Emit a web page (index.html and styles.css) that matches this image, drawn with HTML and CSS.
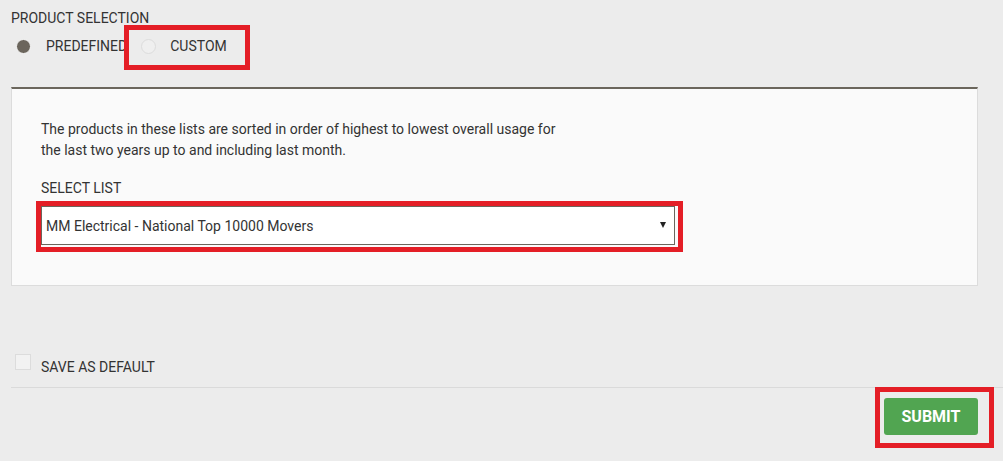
FILE: index.html
```html
<!DOCTYPE html>
<html lang="en">
<head>
  <meta charset="UTF-8" />
  <title>Product Selection</title>
  <link rel="stylesheet" href="styles.css">
</head>
<body>
  <div class="field-title">PRODUCT SELECTION</div>
  <div class="radio-row">
    <label class="radio-option">
      <span class="radio checked"></span>
      <span>PREDEFINED</span>
    </label>
    <label class="radio-option marked marked-custom">
      <span class="radio"></span>
      <span>CUSTOM</span>
    </label>
  </div>

  <div class="panel">
    <p class="note">The products in these lists are sorted in order of highest to lowest overall usage for the last two years up to and including last month.</p>
    <div class="field-title list-title">SELECT LIST</div>
    <div class="select-wrap marked marked-select">
      <select class="list-select">
        <option>MM Electrical - National Top 10000 Movers</option>
      </select>
      <span class="caret"></span>
    </div>
  </div>

  <div class="save-row">
    <span class="checkbox"></span>
    <span class="save-label">SAVE AS DEFAULT</span>
  </div>

  <div class="actions">
    <div class="submit-frame">
      <button class="submit">SUBMIT</button>
    </div>
  </div>
</body>
</html>
```

FILE: styles.css
```css
body {
  font-family: Roboto, 'Liberation Sans', sans-serif;
  margin: 0;
  padding: 10px 0 0 11px;
  background: #ececec;
  color: #333;
  font-size: 14px;
}

.field-title {
  font-size: 14px;
  line-height: 16px;
  color: #333;
}

.radio-row {
  display: flex;
  height: 30px;
  margin-top: 5px;
  padding-left: 5px;
  font-size: 14px;
}

.radio-option {
  display: flex;
  align-items: center;
  gap: 15px;
}

.radio-option + .radio-option {
  margin-left: 14px;
  gap: 14px;
}

.radio {
  width: 15px;
  height: 15px;
  border-radius: 50%;
  box-sizing: border-box;
  background: #efefef;
  border: 1px solid #dcdcdc;
}

.radio.checked {
  background: #6b655c;
  border-color: #f6f6f6;
}

/* red review markers */
.marked {
  position: relative;
}

.marked::before {
  content: "";
  position: absolute;
  box-sizing: border-box;
  border: 5px solid #e41e26;
  pointer-events: none;
}

.marked-custom::before {
  top: -6px;
  left: -17px;
  width: 126px;
  height: 45px;
}

.marked-select::before {
  top: -5px;
  left: -5px;
  width: 647px;
  height: 51px;
}

.panel {
  margin-top: 26px;
  margin-right: 25px;
  background: #fafafa;
  border: 1px solid #dcdcdc;
  border-top: 2px solid #6b665c;
  padding: 30px 29px 40px;
}

.note {
  margin: 0;
  max-width: 525px;
  line-height: 21px;
}

.list-title {
  margin-top: 17px;
  line-height: 21px;
}

.select-wrap {
  margin-top: 7px;
  width: 634px;
}

.list-select {
  display: block;
  width: 100%;
  height: 39px;
  appearance: none;
  -webkit-appearance: none;
  border: 1px solid #6b665c;
  border-radius: 0;
  background: #fff;
  font-family: inherit;
  font-size: 14px;
  color: #333;
  padding: 0 20px 0 4px;
}

.caret {
  position: absolute;
  right: 9px;
  top: 16px;
  border-left: 3px solid transparent;
  border-right: 3px solid transparent;
  border-top: 6px solid #222;
}

.save-row {
  display: flex;
  align-items: flex-start;
  gap: 10px;
  margin-top: 68px;
  padding: 0 0 10px 4px;
  border-bottom: 1px solid #dadada;
}

.checkbox {
  width: 16px;
  height: 16px;
  box-sizing: border-box;
  border: 1px solid #dcdcdc;
  background: #f2f2f2;
}

.save-label {
  line-height: 20px;
  margin-top: 3px;
}

.actions {
  display: flex;
  justify-content: flex-end;
  padding-right: 9px;
  margin-top: -1px;
}

.submit-frame {
  border: 5px solid #e41e26;
  padding: 6px 11px 8px 4px;
}

.submit {
  display: block;
  width: 94px;
  height: 37px;
  border: none;
  border-radius: 3px;
  background: #51a551;
  color: #fff;
  font-family: inherit;
  font-size: 16px;
  font-weight: 700;
  cursor: pointer;
}
```
